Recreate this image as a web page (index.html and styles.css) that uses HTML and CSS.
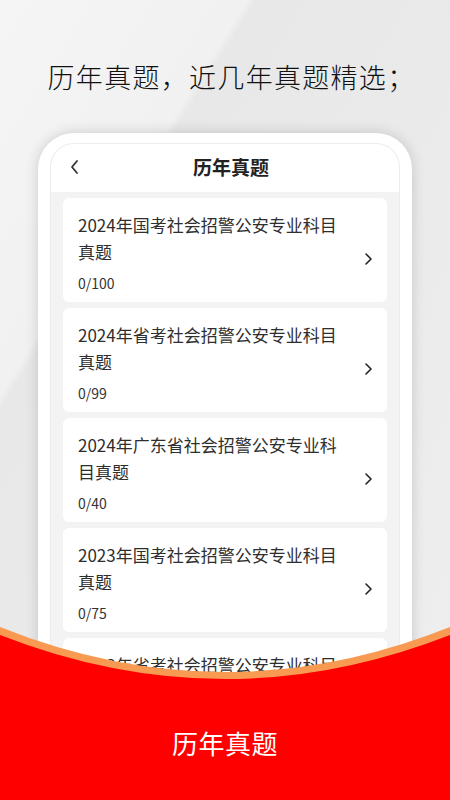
FILE: index.html
```html
<!DOCTYPE html>
<html lang="zh-CN">
<head>
    <meta charset="UTF-8">
    <meta name="viewport" content="width=device-width, initial-scale=1.0">
    <title>历年真题</title>
    <link rel="stylesheet" href="styles.css">
</head>
<body>

    <div class="page">
        <h1 class="slogan">历年真题，近几年真题精选；</h1>

        <div class="phone">
            <div class="screen">
                <div class="topbar">
                    <svg class="back" width="12" height="16" viewBox="0 0 12 16">
                        <path d="M8 2 L3 8 L8 14" fill="none" stroke="#333" stroke-width="1.8" stroke-linecap="round" stroke-linejoin="round"/>
                    </svg>
                    <span class="topbar-title">历年真题</span>
                </div>

                <div class="list">
                    <!-- 试卷列表 -->
                    <div class="card">
                        <div class="card-body">
                            <p class="card-title">2024年国考社会招警公安专业科目真题</p>
                            <p class="card-count">0/100</p>
                        </div>
                        <svg class="arrow" width="10" height="14" viewBox="0 0 10 14"><path d="M3 2 L8 7 L3 12" fill="none" stroke="#222" stroke-width="1.6" stroke-linecap="round" stroke-linejoin="round"/></svg>
                    </div>

                    <div class="card">
                        <div class="card-body">
                            <p class="card-title">2024年省考社会招警公安专业科目真题</p>
                            <p class="card-count">0/99</p>
                        </div>
                        <svg class="arrow" width="10" height="14" viewBox="0 0 10 14"><path d="M3 2 L8 7 L3 12" fill="none" stroke="#222" stroke-width="1.6" stroke-linecap="round" stroke-linejoin="round"/></svg>
                    </div>

                    <div class="card">
                        <div class="card-body">
                            <p class="card-title">2024年广东省社会招警公安专业科目真题</p>
                            <p class="card-count">0/40</p>
                        </div>
                        <svg class="arrow" width="10" height="14" viewBox="0 0 10 14"><path d="M3 2 L8 7 L3 12" fill="none" stroke="#222" stroke-width="1.6" stroke-linecap="round" stroke-linejoin="round"/></svg>
                    </div>

                    <div class="card">
                        <div class="card-body">
                            <p class="card-title">2023年国考社会招警公安专业科目真题</p>
                            <p class="card-count">0/75</p>
                        </div>
                        <svg class="arrow" width="10" height="14" viewBox="0 0 10 14"><path d="M3 2 L8 7 L3 12" fill="none" stroke="#222" stroke-width="1.6" stroke-linecap="round" stroke-linejoin="round"/></svg>
                    </div>

                    <div class="card">
                        <div class="card-body">
                            <p class="card-title">2023年省考社会招警公安专业科目真题</p>
                            <p class="card-count">0/60</p>
                        </div>
                        <svg class="arrow" width="10" height="14" viewBox="0 0 10 14"><path d="M3 2 L8 7 L3 12" fill="none" stroke="#222" stroke-width="1.6" stroke-linecap="round" stroke-linejoin="round"/></svg>
                    </div>
                </div>
            </div>
        </div>

        <footer class="banner">
            <svg class="banner-bg" viewBox="0 0 450 180" preserveAspectRatio="none">
                <path d="M0 7 Q225 97 450 7 L450 180 L0 180 Z" fill="#f89a52"/>
                <path d="M0 15 Q225 103 450 15 L450 180 L0 180 Z" fill="#fe0000"/>
            </svg>
            <span class="banner-text">历年真题</span>
        </footer>
    </div>

</body>
</html>
```

FILE: styles.css
```css
* {
    box-sizing: border-box;
}

body {
    margin: 0;
    font-family: "Noto Sans CJK SC", "Noto Sans", sans-serif;
    color: #333;
}

.page {
    position: relative;
    width: 450px;
    height: 800px;
    overflow: hidden;
    background: linear-gradient(122deg, #f5f5f5 0%, #f1f1f1 26%, #e8e8e8 27%, #ebebeb 60%, #efefef 100%);
}

.slogan {
    margin: 0;
    padding-top: 57px;
    padding-left: 13px;
    height: 133px;
    text-align: center;
    font-size: 27px;
    font-weight: 300;
    line-height: 40px;
    color: #111;
    letter-spacing: 1.3px;
}

.phone {
    margin: 0 38px;
    height: 700px;
    padding: 10px 12px 0;
    background: #fff;
    border-radius: 36px 36px 0 0;
    box-shadow: 0 0 14px rgba(0, 0, 0, 0.16);
}

.screen {
    height: 100%;
    border: 1px solid #ececec;
    border-bottom: none;
    border-radius: 24px 24px 0 0;
    overflow: hidden;
    background: #f3f3f3;
}

.topbar {
    display: flex;
    align-items: center;
    justify-content: center;
    position: relative;
    height: 48px;
    padding: 0 0 3px 12px;
    background: #fff;
}

.back {
    position: absolute;
    left: 18px;
    top: 15px;
}

.topbar-title {
    font-size: 19px;
    font-weight: 700;
    color: #222;
}

.list {
    display: flex;
    flex-direction: column;
    gap: 6px;
    padding: 6px 12px;
}

.card {
    display: flex;
    align-items: center;
    height: 104px;
    padding: 13px 14px 10px 15px;
    background: #fff;
    border-radius: 6px;
}

.card-body {
    width: 272px;
}

.card-title {
    margin: 0;
    font-size: 17px;
    line-height: 27px;
    color: #2e2e2e;
}

.card-count {
    margin: 8px 0 0;
    font-size: 14px;
    line-height: 20px;
    color: #333;
}

.arrow {
    margin-left: auto;
    margin-top: 14px;
}

.banner {
    position: absolute;
    left: 0;
    right: 0;
    bottom: 0;
    height: 180px;
    display: flex;
    justify-content: center;
    padding-top: 106px;
}

.banner-bg {
    position: absolute;
    left: 0;
    top: 0;
    width: 100%;
    height: 100%;
}

.banner-text {
    position: relative;
    font-size: 26px;
    font-weight: 400;
    line-height: 34px;
    color: #fff;
    letter-spacing: 0.5px;
}
```
